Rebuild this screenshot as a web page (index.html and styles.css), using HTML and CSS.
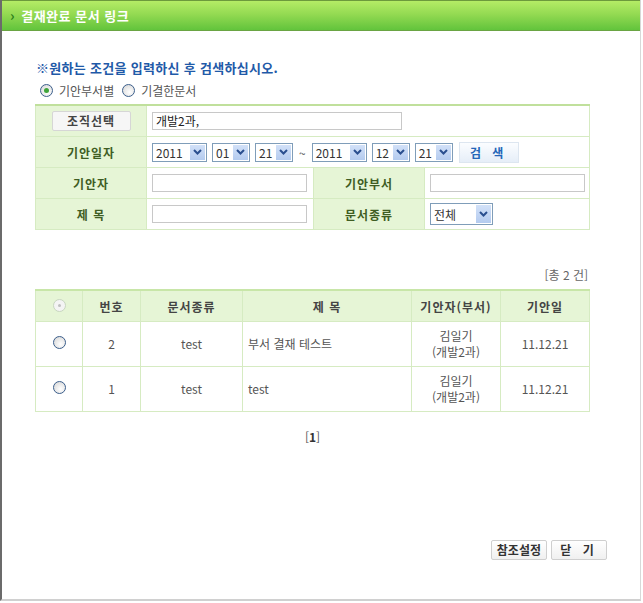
FILE: index.html
```html
<!DOCTYPE html>
<html lang="ko">
<head>
    <meta charset="UTF-8">
    <title>결재완료 문서 링크</title>
    <link rel="stylesheet" href="styles.css">
</head>
<body>
<div class="wrap">
    <!-- title bar -->
    <div class="title-bar">
        <span class="chev">&rsaquo;</span> 결재완료 문서 링크
    </div>

    <div class="content">
        <p class="notice">※원하는 조건을 입력하신 후 검색하십시오.</p>

        <div class="radio-row">
            <span class="radio checked"></span><span class="rlabel">기안부서별</span>
            <span class="radio"></span><span class="rlabel">기결한문서</span>
        </div>

        <!-- search conditions -->
        <table class="search">
            <colgroup>
                <col style="width:111px">
                <col style="width:167px">
                <col style="width:111px">
                <col>
            </colgroup>
            <tr>
                <th><span class="btn-org">조직선택</span></th>
                <td colspan="3"><span class="inp inp-org">개발2과,</span></td>
            </tr>
            <tr>
                <th>기안일자</th>
                <td colspan="3">
                    <div class="date-row">
                        <span class="sel w55">2011<span class="arr"><svg width="9" height="6" viewBox="0 0 9 6"><path d="M1 1 L4.5 4.5 L8 1" fill="none" stroke="#2a4f8f" stroke-width="2"/></svg></span></span>
                        <span class="sel w38">01<span class="arr"><svg width="9" height="6" viewBox="0 0 9 6"><path d="M1 1 L4.5 4.5 L8 1" fill="none" stroke="#2a4f8f" stroke-width="2"/></svg></span></span>
                        <span class="sel w38">21<span class="arr"><svg width="9" height="6" viewBox="0 0 9 6"><path d="M1 1 L4.5 4.5 L8 1" fill="none" stroke="#2a4f8f" stroke-width="2"/></svg></span></span>
                        <span class="tilde">~</span>
                        <span class="sel w55">2011<span class="arr"><svg width="9" height="6" viewBox="0 0 9 6"><path d="M1 1 L4.5 4.5 L8 1" fill="none" stroke="#2a4f8f" stroke-width="2"/></svg></span></span>
                        <span class="sel w38">12<span class="arr"><svg width="9" height="6" viewBox="0 0 9 6"><path d="M1 1 L4.5 4.5 L8 1" fill="none" stroke="#2a4f8f" stroke-width="2"/></svg></span></span>
                        <span class="sel w38">21<span class="arr"><svg width="9" height="6" viewBox="0 0 9 6"><path d="M1 1 L4.5 4.5 L8 1" fill="none" stroke="#2a4f8f" stroke-width="2"/></svg></span></span>
                        <span class="btn-search">검 색</span>
                    </div>
                </td>
            </tr>
            <tr>
                <th>기안자</th>
                <td><span class="inp inp-sm"></span></td>
                <th>기안부서</th>
                <td><span class="inp inp-sm"></span></td>
            </tr>
            <tr>
                <th>제 목</th>
                <td><span class="inp inp-sm"></span></td>
                <th>문서종류</th>
                <td>
                    <span class="sel sel-tall w63">전체<span class="arr"><svg width="9" height="6" viewBox="0 0 9 6"><path d="M1 1 L4.5 4.5 L8 1" fill="none" stroke="#2a4f8f" stroke-width="2"/></svg></span></span>
                </td>
            </tr>
        </table>

        <div class="total">[총 2 건]</div>

        <!-- result list -->
        <table class="list">
            <colgroup>
                <col style="width:47px">
                <col style="width:58px">
                <col style="width:102px">
                <col style="width:169px">
                <col style="width:89px">
                <col>
            </colgroup>
            <tr>
                <th><span class="radio disabled"></span></th>
                <th>번호</th>
                <th>문서종류</th>
                <th>제 목</th>
                <th>기안자(부서)</th>
                <th>기안일</th>
            </tr>
            <tr>
                <td><span class="radio"></span></td>
                <td>2</td>
                <td>test</td>
                <td class="left">부서 결재 테스트</td>
                <td>김일기<br>(개발2과)</td>
                <td>11.12.21</td>
            </tr>
            <tr>
                <td><span class="radio"></span></td>
                <td>1</td>
                <td>test</td>
                <td class="left">test</td>
                <td>김일기<br>(개발2과)</td>
                <td>11.12.21</td>
            </tr>
        </table>

        <div class="paging">[<b>1</b>]</div>

        <div class="buttons">
            <span class="btn">참조설정</span>
            <span class="btn btn-close">닫 기</span>
        </div>
    </div>
</div>
</body>
</html>
```

FILE: styles.css
```css
body {
    margin: 0;
    padding: 0;
    background-color: #ffffff;
    font-family: "Noto Sans CJK KR", "Liberation Sans", sans-serif;
    font-size: 12px;
    color: #555555;
}

.wrap {
    width: 638px;
    height: 599px;
    border-left: 2px solid #6b6b6b;
    border-right: 1px solid #d8d8d8;
    border-bottom: 2px solid #d0d0d0;
    position: relative;
}

.title-bar {
    height: 29px;
    line-height: 29px;
    border-top: 1px solid #6c9a3c;
    border-bottom: 1px solid #6aa443;
    background: linear-gradient(to bottom, #b4ec66 0%, #94da52 45%, #62c43c 100%);
    color: #ffffff;
    font-weight: bold;
    font-size: 13px;
    padding-left: 8px;
    letter-spacing: 0.5px;
}

.title-bar .chev {
    color: #2e7d1a;
    font-size: 14px;
    margin-right: 2px;
}

.content {
    padding-left: 33px;
}

.notice {
    margin: 28px 0 0 1px;
    color: #1f5aa8;
    font-weight: bold;
    font-size: 13px;
    line-height: 18px;
    letter-spacing: 0.3px;
}

.radio-row {
    display: flex;
    align-items: center;
    height: 20px;
    margin-top: 3px;
    margin-left: 5px;
}

.rlabel {
    margin: 0 8px 0 6px;
    color: #555555;
}

.radio {
    display: inline-block;
    width: 11px;
    height: 11px;
    border: 1px solid #3c5f8c;
    border-radius: 50%;
    background: radial-gradient(circle at 60% 65%, #ffffff 0%, #dcdcdc 80%);
    position: relative;
    box-sizing: content-box;
}

.radio.checked::after {
    content: "";
    position: absolute;
    left: 3px;
    top: 3px;
    width: 5px;
    height: 5px;
    border-radius: 50%;
    background: #3fa43a;
}

.radio.disabled {
    border-color: #c8d6c0;
    background: #f4f4f4;
}

.radio.disabled::after {
    content: "";
    position: absolute;
    left: 4px;
    top: 4px;
    width: 3px;
    height: 3px;
    border-radius: 50%;
    background: #c0c0c0;
}

/* search table */
.search {
    width: 555px;
    margin-top: 4px;
    border-collapse: collapse;
    border-top: 2px solid #c0e09c;
    border-bottom: 1px solid #d6ebc2;
}

.search th,
.search td {
    border: 1px solid #d6ebc2;
    height: 30px;
    padding: 0;
}

.search tr:first-child th,
.search tr:first-child td {
    border-top: none;
}

.search th {
    background-color: #e6f5d6;
    color: #3f5d23;
    font-weight: bold;
    font-size: 12px;
    text-align: center;
    letter-spacing: 1px;
}

.search td {
    padding-left: 5px;
}

.btn-org {
    display: inline-block;
    width: 77px;
    height: 18px;
    line-height: 18px;
    border: 1px solid #d6d6d6;
    background: #f6f6f6;
    color: #444444;
    font-weight: bold;
    border-radius: 2px;
}

.inp {
    display: block;
    height: 16px;
    line-height: 16px;
    border: 1px solid #c8c8c8;
    background: #ffffff;
    color: #222222;
    padding-left: 3px;
    font-size: 12px;
}

.inp-org {
    width: 245px;
}

.inp-sm {
    width: 150px;
}

.date-row {
    display: flex;
    align-items: center;
}

.sel {
    display: inline-flex;
    align-items: center;
    justify-content: space-between;
    height: 17px;
    border: 1px solid #7f9db9;
    background: #ffffff;
    color: #333333;
    padding-left: 3px;
    margin-right: 5px;
    font-size: 12px;
    box-sizing: content-box;
}

.sel .arr {
    width: 15px;
    height: 15px;
    margin-right: 1px;
    background: linear-gradient(to bottom, #d2e1f8, #b4cbef);
    display: flex;
    align-items: center;
    justify-content: center;
}

.w55 { width: 50px; }
.w38 { width: 33px; }
.w63 { width: 58px; }

.sel-tall {
    height: 20px;
}

.sel-tall .arr {
    height: 18px;
}

.tilde {
    margin: 0 6px 0 1px;
    color: #555555;
}

.btn-search {
    display: inline-block;
    width: 58px;
    height: 19px;
    line-height: 19px;
    margin-left: 1px;
    text-align: center;
    color: #2566b8;
    font-weight: bold;
    letter-spacing: 4px;
    background: linear-gradient(to bottom, #fbfdff, #e6eef8);
    border: 1px solid #dde6f0;
}

.total {
    width: 553px;
    text-align: right;
    margin-top: 35px;
    height: 20px;
    line-height: 20px;
    color: #666666;
}

/* result list */
.list {
    width: 555px;
    margin-top: 4px;
    border-collapse: collapse;
    border-top: 2px solid #c8e6a8;
    border-bottom: 1px solid #d6ebc2;
}

.list th,
.list td {
    border: 1px solid #d6ebc2;
    text-align: center;
    padding: 0;
}

.list th {
    height: 30px;
    background-color: #e6f5d6;
    color: #444444;
    font-weight: bold;
    letter-spacing: 1px;
}

.list tr:first-child th {
    border-top: none;
}

.list td {
    height: 44px;
    color: #555555;
    line-height: 16px;
}

.list td.left {
    text-align: left;
    padding-left: 5px;
}

.paging {
    width: 555px;
    text-align: center;
    margin-top: 16px;
    color: #555555;
}

.paging b {
    color: #333333;
}

.buttons {
    position: absolute;
    right: 33px;
    top: 540px;
    display: flex;
    gap: 4px;
}

.btn {
    display: inline-block;
    height: 18px;
    line-height: 18px;
    padding: 0 5px;
    border: 1px solid #cfcfcf;
    background: linear-gradient(to bottom, #ffffff, #f0f0f0);
    color: #333333;
    font-weight: bold;
    font-size: 12px;
    border-radius: 2px;
}

.btn-close {
    width: 44px;
    text-align: center;
    letter-spacing: 4px;
}
```
